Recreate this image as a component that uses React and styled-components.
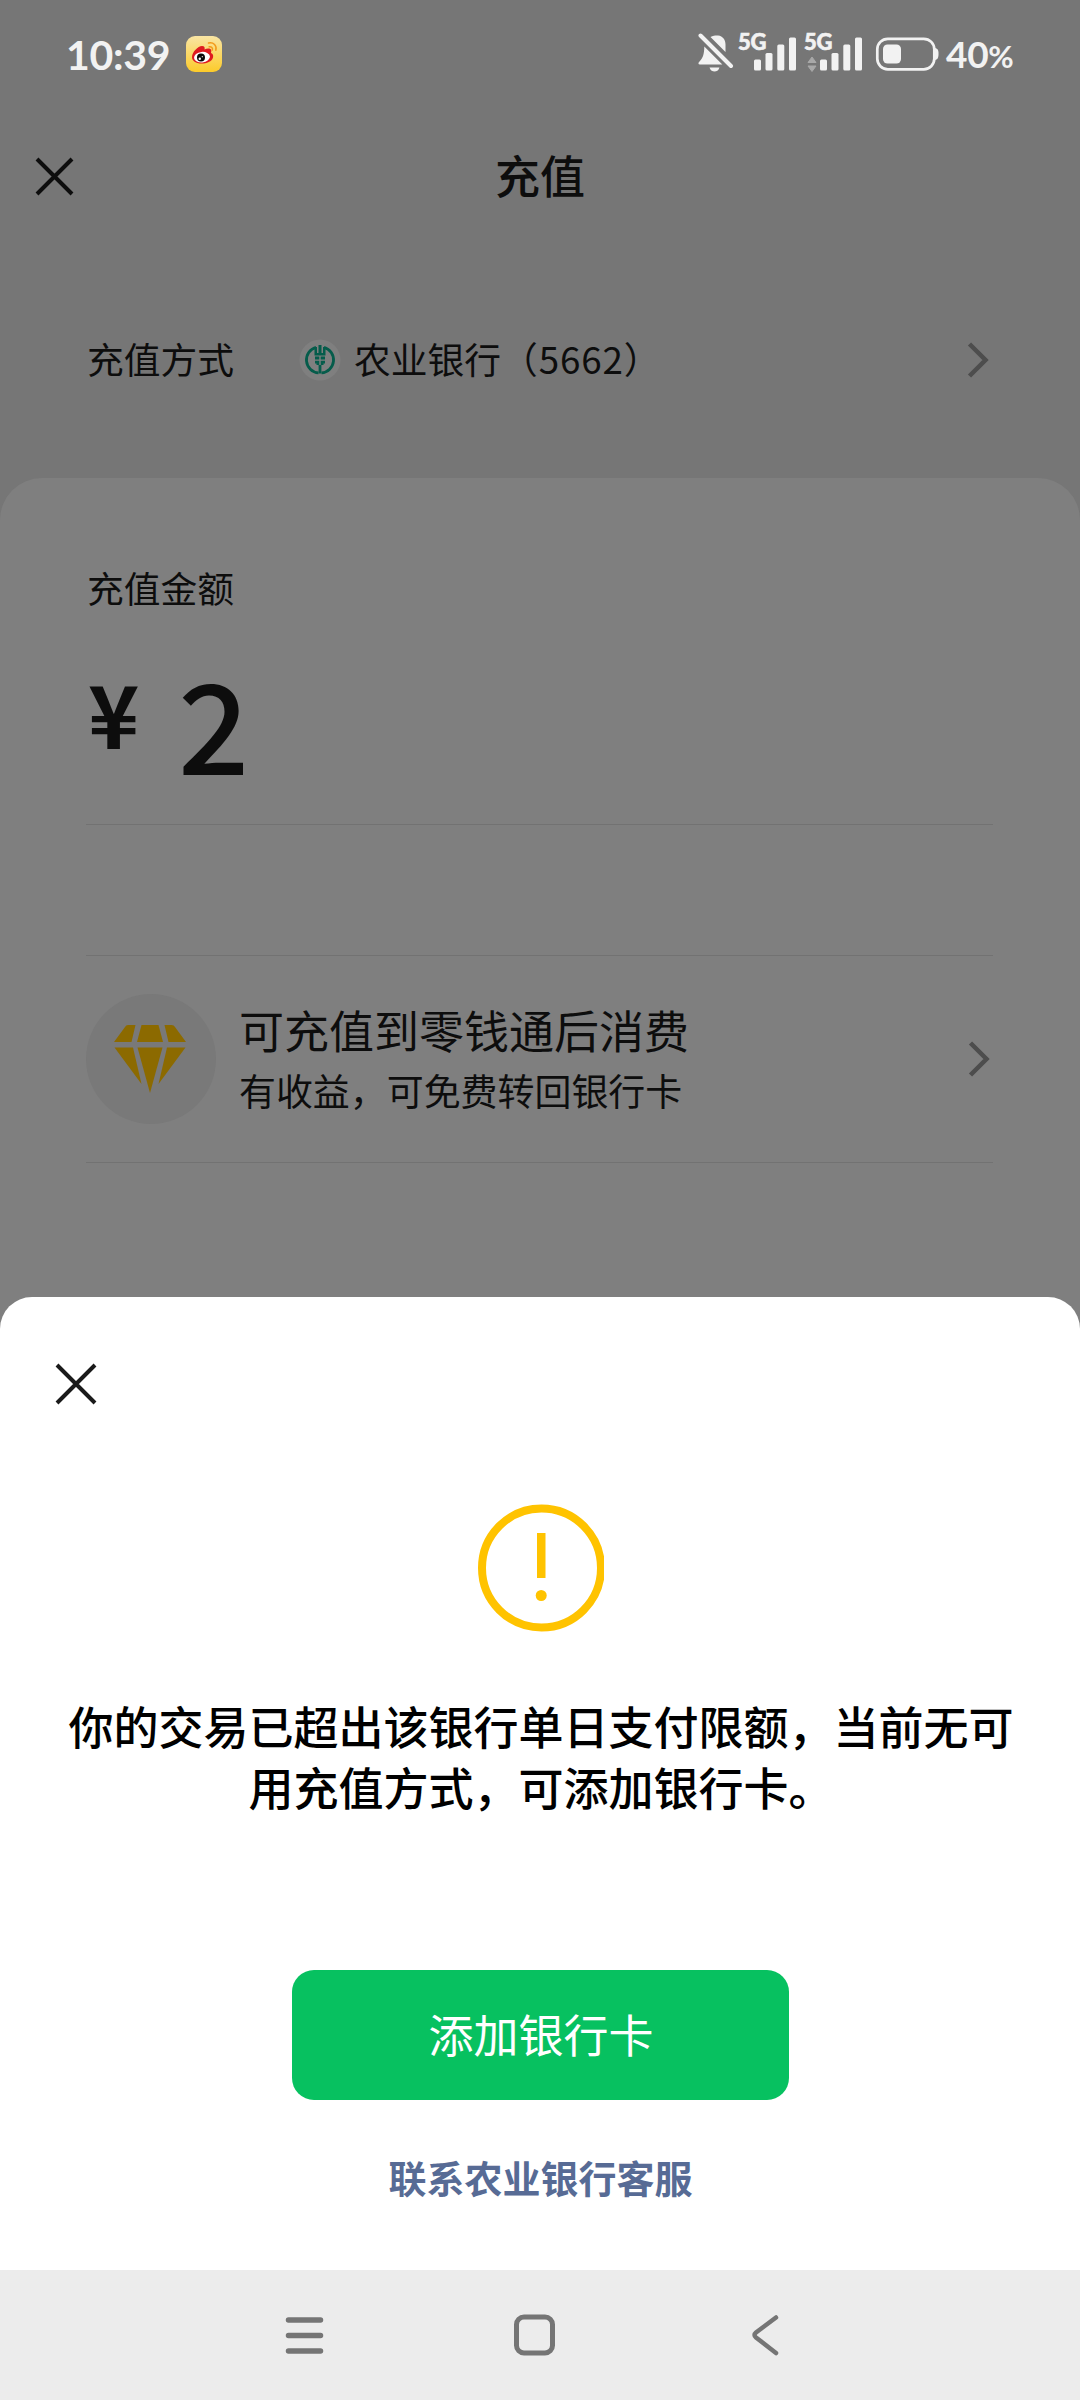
import React from "react";
import styled, { createGlobalStyle } from "styled-components";

const Global = createGlobalStyle`
  * { box-sizing: border-box; }
  html, body { margin: 0; padding: 0; background: #767676; }
  body, button {
    font-family: "Noto Sans CJK SC", "Noto Sans", sans-serif;
  }
  svg { display: block; flex: none; }
`;

const Screen = styled.div`
  width: 1080px;
  height: 2400px;
  display: flex;
  flex-direction: column;
  background: #767676;
  color: #0d0d0d;
  overflow: hidden;
`;

const StatusBar = styled.header`
  height: 108px;
  padding: 0 65px 0 66px;
  display: flex;
  align-items: center;
  justify-content: space-between;
  color: #f2f2f2;
`;

const StatusGroup = styled.div`
  display: flex;
  align-items: center;
`;

const Clock = styled.span`
  font: 700 41px/60px Lato, sans-serif;
  letter-spacing: -0.3px;
  width: 120px;
  padding-top: 1px;
  white-space: nowrap;
`;

const Percent = styled.span`
  width: 69px;
  margin-left: 5px;
  padding-top: 1px;
  font: 700 37px/56px Lato, sans-serif;
  letter-spacing: -0.3px;
  white-space: nowrap;
  small { font-size: 31px; }
`;

const TitleBar = styled.div`
  height: 136px;
  padding: 0 33px;
  display: grid;
  grid-template-columns: 43px 1fr 43px;
  align-items: center;
`;

const Title = styled.h1`
  margin: 0;
  padding-bottom: 3px;
  text-align: center;
  font-size: 45px;
  line-height: 60px;
  font-weight: 500;
`;

const IconButton = styled.button`
  display: flex;
  padding: 0;
  border: 0;
  background: none;
  color: inherit;
`;

const MethodRow = styled.div`
  height: 234px;
  padding: 0 88px 2px 87px;
  display: flex;
  align-items: center;
  font-size: 36.75px;
  line-height: 56px;
`;

const MethodLabel = styled.span`
  width: 211px;
  padding-bottom: 4px;
`;

const BankName = styled.span`
  flex: 1;
  margin-left: 12px;
  padding-bottom: 4px;
`;

const CardTail = styled.span`
  letter-spacing: 0.9px;
`;

const Card = styled.main`
  flex: 1;
  padding: 81px 87px 0 86px;
  border-radius: 42px 42px 0 0;
  background: #7f7f7f;
`;

const FieldLabel = styled.div`
  padding-left: 1px;
  font-size: 36.75px;
  line-height: 56px;
`;

const Amount = styled.div`
  height: 210px;
  display: flex;
  border-bottom: 1px solid #727272;
`;

const Currency = styled.span`
  width: 92px;
  padding: 46px 0 0 2px;
  font-size: 87px;
  line-height: 100px;
  font-weight: 700;
`;

const Digits = styled.span`
  padding-top: 36px;
  font-size: 125px;
  line-height: 140px;
  font-weight: 500;
`;

const Promo = styled.section`
  height: 208px;
  margin-top: 130px;
  display: flex;
  align-items: center;
  border-top: 1px solid #727272;
  border-bottom: 1px solid #727272;
`;

const PromoIcon = styled.div`
  width: 130px;
  height: 130px;
  display: grid;
  place-items: center;
  padding-right: 2px;
  border-radius: 50%;
  background: #797979;
`;

const PromoText = styled.div`
  flex: 1;
  margin-left: 23px;
  padding-bottom: 2px;
`;

const PromoTitle = styled.div`
  font-size: 45px;
  line-height: 65px;
`;

const PromoSub = styled.div`
  font-size: 36.95px;
  line-height: 57px;
`;

const Sheet = styled.section`
  height: 973px;
  display: flex;
  flex-direction: column;
  align-items: center;
  border-radius: 32px 32px 0 0;
  background: #fff;
  color: #000;
`;

const SheetWrap = styled.div`
  background: #7f7f7f;
`;

const SheetTop = styled.div`
  width: 100%;
  padding: 64px 0 0 53px;
  color: #1a1a1a;
`;

const Message = styled.p`
  width: 947px;
  margin: 63px 0 0;
  padding-left: 2px;
  font-size: 45px;
  line-height: 61px;
  font-weight: 500;
  text-align: center;
`;

const PrimaryButton = styled.button`
  width: 497px;
  height: 130px;
  margin-top: 153px;
  padding: 0 0 2px 2px;
  border: 0;
  border-radius: 22px;
  background: #07c160;
  color: #fff;
  font-size: 45px;
  line-height: 60px;
  font-weight: 400;
`;

const SupportLink = styled.a`
  margin-top: 49px;
  padding-left: 1px;
  color: #576b95;
  font-size: 38px;
  line-height: 56px;
  font-weight: 700;
`;

const NavBar = styled.nav`
  height: 130px;
  display: flex;
  align-items: center;
  justify-content: center;
  gap: 185px;
  padding-right: 11px;
  background: #ececec;
`;

const Cross = ({ span = 37, stroke = 4 }) => (
  <svg width={span + 6} height={span + 6} viewBox={`0 0 ${span + 6} ${span + 6}`}>
    <path
      d={`M4 4L${span + 2} ${span + 2}M${span + 2} 4L4 ${span + 2}`}
      stroke="currentColor"
      strokeWidth={stroke}
    />
  </svg>
);

const Chevron = () => (
  <svg width="25" height="40" viewBox="0 0 25 40" fill="none">
    <path d="M2.500 4L18.500 20L2.500 36" stroke="#4d4d4d" strokeWidth="4.500" />
  </svg>
);

const WeiboIcon = () => (
  <svg width="36" height="36" viewBox="0 0 36 36">
    <defs>
      <linearGradient id="weibo" x1="0" y1="0" x2="0" y2="1">
        <stop offset="0" stopColor="#f9e5a4" />
        <stop offset="1" stopColor="#fccb2a" />
      </linearGradient>
    </defs>
    <rect width="36" height="36" rx="9" fill="url(#weibo)" />
    <path
      d="M6 21C6 16 12 10 16 10C18.500 10 19 11.500 18.500 13.500C21 12.200 25 12 25.300 14.500C25.400 15.500 25 16.500 25 17C27 17.700 27.500 19.500 27 21.500C26 25.500 20.500 27.500 15.500 27.500C10 27.500 6 25 6 21Z"
      fill="#df1a20"
    />
    <ellipse cx="16" cy="21.200" rx="8" ry="5.300" fill="#fff" transform="rotate(-6 16 21.200)" />
    <circle cx="15" cy="21.500" r="4" fill="#0a0a0a" />
    <circle cx="13.800" cy="22.800" r="1.200" fill="#fff" />
    <circle cx="16.300" cy="20.700" r="0.600" fill="#fff" />
    <path
      d="M22.500 7C27.500 5.800 31.200 9.700 29.800 14.300M23.200 10.800C25.500 10.400 27 12 26.300 14"
      fill="none"
      stroke="#f39a1c"
      strokeWidth="1.500"
      strokeLinecap="round"
    />
  </svg>
);

const BellOff = () => (
  <svg width="40" height="42" viewBox="0 0 40 42">
    <g transform="translate(0 -1.500)">
      <path
        d="M12.500 5.500C15.500 4 18 3.800 20 4C25 4.500 27.500 8.500 27.500 13V20.500Z"
        fill="#f2f2f2"
      />
      <path d="M6.300 15L24.300 33H2C0 33 0 31.500 1.500 30C4.500 27 6.300 23 6.300 15Z" fill="#f2f2f2" />
      <path d="M11.500 36H21.500C20.500 39 18.500 40 16.500 40C14.500 40 12.500 39 11.500 36Z" fill="#f2f2f2" />
      <path d="M2.500 4L33 34.500" stroke="#f2f2f2" strokeWidth="4" strokeLinecap="round" />
    </g>
  </svg>
);

const NetLabel = styled.span`
  width: 0;
  height: 44px;
  font: 900 22px/19px Lato, sans-serif;
  letter-spacing: -0.3px;
  white-space: nowrap;
  -webkit-text-stroke: 0.6px #f2f2f2;
`;

const Signal = ({ arrows }) => (
  <>
    <NetLabel>5G</NetLabel>
    <svg width="66" height="42" viewBox="0 0 66 42" fill="#f2f2f2">
      {arrows && (
        <path d="M8 24L12 29.500H4ZM4 33H12L8 38.500Z" fill="#a8a8a8" stroke="#a8a8a8" strokeLinejoin="round" />
      )}
      <rect x="16" y="26.500" width="7" height="11" rx="1.500" />
      <rect x="27.500" y="20" width="7" height="17.500" rx="1.500" />
      <rect x="39.300" y="11.500" width="7" height="26" rx="1.500" />
      <rect x="51" y="4.500" width="7" height="33" rx="1.500" />
    </svg>
  </>
);

const Battery = () => (
  <svg width="71" height="42" viewBox="0 0 71 42">
    <rect x="7.300" y="5.800" width="57" height="30.500" rx="10.500" fill="none" stroke="#f2f2f2" strokeWidth="2.700" />
    <rect x="13" y="11.500" width="18" height="19" rx="4.500" fill="#f2f2f2" />
    <path d="M65 15C68 15.500 68.500 17.500 68.500 20.800S68 26.500 65 27Z" fill="#f2f2f2" />
  </svg>
);

const BankLogo = () => (
  <svg width="44" height="44" viewBox="0 0 44 44" fill="none">
    <circle cx="22" cy="22" r="20.500" fill="#7f7f7f" />
    <path
      d="M18 9.300A13 13 0 0 0 20.500 34.800M26 9.300A13 13 0 0 1 23.500 34.800"
      stroke="#055c4b"
      strokeWidth="2.800"
    />
    <path d="M20.500 7H23.500V15H25V9H27.500V17.500H16.500V9H19V15H20.500Z" fill="#055c4b" />
    <path
      d="M17 18.500H21.300V21.500H17ZM22.700 18.500H27V21.500H22.700ZM17 22.700H21.300V27H18.500V25.500H17ZM22.700 22.700H27V25.500H25.500V27H22.700ZM20.600 27H23.400V35.500H20.600Z"
      fill="#055c4b"
    />
  </svg>
);

const Diamond = () => (
  <svg width="72" height="68" viewBox="0 0 72 68" fill="#8c6a00">
    <path d="M14 0H21.500L17.500 17H0L11 2Q12 0 14 0Z" />
    <path d="M27.500 0H44.500L49 17H23Z" />
    <path d="M50.500 0H57.500Q60 0 61 2L72 17H54.500Z" />
    <path d="M0.500 22.500H19L27.500 59Z" />
    <path d="M23.500 22.500H48.500L36 68Z" />
    <path d="M53 22.500H71.500L44.500 59Z" />
  </svg>
);

const Warning = styled.svg`
  margin-top: 97px;
`;

export default function App() {
  return (
    <Screen>
      <Global />
      <StatusBar>
        <StatusGroup>
          <Clock>10:39</Clock>
          <WeiboIcon />
        </StatusGroup>
        <StatusGroup>
          <BellOff />
          <Signal />
          <Signal arrows />
          <Battery />
          <Percent>
            40<small>%</small>
          </Percent>
        </StatusGroup>
      </StatusBar>
      <TitleBar>
        <IconButton aria-label="关闭">
          <Cross />
        </IconButton>
        <Title>充值</Title>
      </TitleBar>
      <MethodRow>
        <MethodLabel>充值方式</MethodLabel>
        <BankLogo />
        <BankName>
          农业银行<CardTail>（5662）</CardTail>
        </BankName>
        <Chevron />
      </MethodRow>
      <Card>
        <FieldLabel>充值金额</FieldLabel>
        <Amount>
          <Currency>¥</Currency>
          <Digits>2</Digits>
        </Amount>
        <Promo>
          <PromoIcon>
            <Diamond />
          </PromoIcon>
          <PromoText>
            <PromoTitle>可充值到零钱通后消费</PromoTitle>
            <PromoSub>有收益，可免费转回银行卡</PromoSub>
          </PromoText>
          <Chevron />
        </Promo>
      </Card>
      <SheetWrap>
        <Sheet>
          <SheetTop>
            <IconButton aria-label="关闭">
              <Cross span={40} />
            </IconButton>
          </SheetTop>
          <Warning width="128" height="128" viewBox="0 0 128 128">
            <circle cx="65.500" cy="64" r="59.500" fill="none" stroke="#ffc300" strokeWidth="8" />
            <rect x="61" y="29" width="8.500" height="45" fill="#ffc300" />
            <circle cx="65.200" cy="91.500" r="5.500" fill="#ffc300" />
          </Warning>
          <Message>你的交易已超出该银行单日支付限额，当前无可用充值方式，可添加银行卡。</Message>
          <PrimaryButton>添加银行卡</PrimaryButton>
          <SupportLink>联系农业银行客服</SupportLink>
        </Sheet>
      </SheetWrap>
      <NavBar>
        <svg width="45" height="45" viewBox="0 0 45 45">
          <path d="M6.500 7H38.500M6.500 22.500H38.500M6.500 38H38.500" stroke="#757575" strokeWidth="5.500" strokeLinecap="round" />
        </svg>
        <svg width="45" height="45" viewBox="0 0 45 45">
          <rect x="4.500" y="4" width="36" height="36" rx="7.500" fill="none" stroke="#757575" strokeWidth="5" />
        </svg>
        <svg width="45" height="45" viewBox="0 0 45 45">
          <path
            d="M34 4.500L14 19.500Q11 22 14 24.500L34 40"
            fill="none"
            stroke="#757575"
            strokeWidth="4.500"
            strokeLinecap="round"
          />
        </svg>
      </NavBar>
    </Screen>
  );
}
